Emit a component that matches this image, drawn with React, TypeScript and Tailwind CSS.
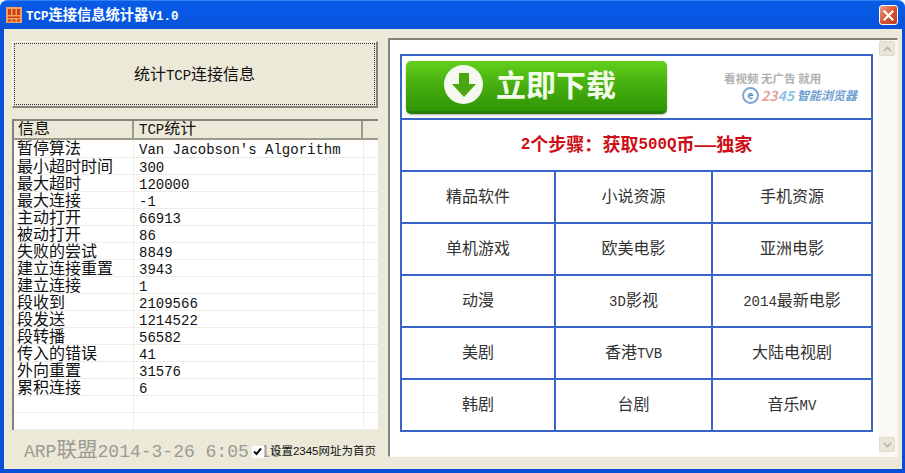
const rows: [string, string][] = [
  ["暂停算法", "Van Jacobson's Algorithm"],
  ["最小超时时间", "300"],
  ["最大超时", "120000"],
  ["最大连接", "-1"],
  ["主动打开", "66913"],
  ["被动打开", "86"],
  ["失败的尝试", "8849"],
  ["建立连接重置", "3943"],
  ["建立连接", "1"],
  ["段收到", "2109566"],
  ["段发送", "1214522"],
  ["段转播", "56582"],
  ["传入的错误", "41"],
  ["外向重置", "31576"],
  ["累积连接", "6"],
  ["", ""],
  ["", ""],
];

const cells = [
  ["精品软件", "小说资源", "手机资源"],
  ["单机游戏", "欧美电影", "亚洲电影"],
  ["动漫", "3D影视", "2014最新电影"],
  ["美剧", "香港TVB", "大陆电视剧"],
  ["韩剧", "台剧", "音乐MV"],
];

function T({ s }: { s: string }) {
  const parts = s.match(/[\x00-\x7f]+|[^\x00-\x7f]+/g) || [];
  return (
    <>
      {parts.map((p, i) =>
        /[\x00-\x7f]/.test(p[0]) ? (
          <span key={i}>{p}</span>
        ) : (
          <span key={i} className="text-[1.143em]">
            {p}
          </span>
        ),
      )}
    </>
  );
}

const font = "font-['Liberation_Mono','Noto_Sans_CJK_SC',monospace]";

export default function App() {
  return (
    <div className={`w-[905px] h-[473px] overflow-hidden bg-white flex flex-col text-[#111] ${font}`}>
      <div className="h-[29px] shrink-0 rounded-t-[7px] bg-gradient-to-b from-[#0a5be6] via-[#0558e4] to-[#0a52d8] flex items-center pl-[6px] pr-[7px] border-t border-[#2f82f5]">
        <svg width="16" height="16" viewBox="0 0 16 16" className="shrink-0">
          <rect width="16" height="16" fill="#f6a15a" />
          <rect x="2" y="2" width="3" height="6" fill="#c8401a" />
          <rect x="6.5" y="2" width="3" height="6" fill="#c8401a" />
          <rect x="11" y="2" width="3" height="6" fill="#c8401a" />
          <rect x="2" y="9.5" width="12" height="1.5" fill="#c8401a" />
          <rect x="2" y="12.5" width="3" height="2" fill="#c8401a" />
          <rect x="6.5" y="12.5" width="3" height="2" fill="#c8401a" />
          <rect x="11" y="12.5" width="3" height="2" fill="#c8401a" />
        </svg>
        <div className="ml-[4px] pt-[2px] text-white font-bold text-[12.5px] leading-none whitespace-nowrap">
          <T s="TCP连接信息统计器V1.0" />
        </div>
        <div className="ml-auto w-[19px] h-[20px] rounded-[3px] border border-white bg-gradient-to-br from-[#e8a08a] via-[#d9552e] to-[#b83a1c] flex items-center justify-center">
          <svg width="11" height="11" viewBox="0 0 11 11">
            <path d="M1.5 1.5 L9.5 9.5 M9.5 1.5 L1.5 9.5" stroke="#fff" strokeWidth="2.2" strokeLinecap="square" />
          </svg>
        </div>
      </div>

      <div className="flex-1 min-h-0 bg-[#0a4fd8] px-[4px] pb-[4px] flex">
        <div className="flex-1 bg-[#ece9d8] flex pl-[8px] pr-[4px] pt-[9px] pb-[6px] gap-[10px]">
          <div className="w-[366px] shrink-0 flex flex-col">
            <div className="h-[67px] shrink-0 mt-[3px] border-r-2 border-b-2 border-[#85847a] border-t border-l border-t-[#fbfaf5] border-l-[#fbfaf5] p-[1px]">
              <div className="h-full border border-dotted border-[#333] flex items-center justify-center pt-[4px] text-[14px] leading-none">
                <T s="统计TCP连接信息" />
              </div>
            </div>
            <div className="mt-[11px] h-[311px] shrink-0 border-t-2 border-l-2 border-[#85847a] bg-white flex flex-col overflow-hidden">
              <div className="h-[19px] shrink-0 bg-[#ece9d8] flex border-b-2 border-[#9c9a8c] text-[14px] leading-[17px]">
                <div className="w-[120px] pl-[4px] pt-[1px] border-r-2 border-[#9c9a8c]">
                  <T s="信息" />
                </div>
                <div className="w-[229px] pl-[5px] pt-[1px] border-r-2 border-[#9c9a8c]">
                  <T s="TCP统计" />
                </div>
              </div>
              {rows.map((r, i) => (
                <div
                  key={i}
                  className={`${i === 0 ? "h-[18px]" : "h-[17px]"} shrink-0 flex border-b border-[#eeede6] text-[14px] leading-[16px] whitespace-nowrap`}
                >
                  <div className="w-[120px] pl-[3px] pt-[2px] border-r border-[#eeede6]">
                    <T s={r[0]} />
                  </div>
                  <div className="w-[230px] pl-[5px] pt-[2px] border-r border-[#eeede6]">{r[1]}</div>
                </div>
              ))}
            </div>
            <div className="relative shrink-0 mt-[9px] h-[24px] pl-[12px] pt-[2px] text-[18px] leading-[22px] text-[#9c9b91] whitespace-nowrap overflow-hidden">
              <T s="ARP联盟2014-3-26 6:05:16" />
              <div className="absolute right-[2px] top-[6px] flex items-center h-[13px]">
                <div className="w-[12px] h-[12px] bg-white flex items-center justify-center">
                  <svg width="9" height="9" viewBox="0 0 9 9">
                    <path d="M1 4.5 L3.5 7 L8 1.5" stroke="#111" strokeWidth="2" fill="none" />
                  </svg>
                </div>
                <span className="ml-[6px] text-[11.5px] leading-none text-[#111] font-['Liberation_Sans','Noto_Sans_CJK_SC',sans-serif]">
                  设置2345网址为首页
                </span>
              </div>
            </div>
          </div>

          <div className="flex-1 min-w-0 mb-[6px] bg-white border-t-2 border-l-2 border-[#85847a] border-r border-b border-r-[#fbfaf5] border-b-[#fbfaf5] flex">
            <div className="flex-1 pt-[14px] pl-[10px] pr-[6px]">
              <div className="w-[473px] h-[378px] border-2 border-[#3b64c8] flex flex-col">
                <div className="h-[64px] shrink-0 flex items-center border-b-2 border-[#3b64c8] pl-[4px]">
                  <div className="w-[261px] h-[53px] rounded-[5px] bg-gradient-to-b from-[#62d01c] via-[#45ad0e] to-[#2f9606] border-b-[3px] border-[#287c08] shadow-[0_1px_2px_rgba(0,0,0,0.3)] flex items-center pl-[38px] pb-[2px]">
                    <div className="w-[39px] h-[39px] rounded-full bg-[#f4f8ee] flex items-center justify-center">
                      <svg width="28" height="28" viewBox="0 0 28 28">
                        <path d="M9 2 H19 V13 H26 L14 26 L2 13 H9 Z" fill="#4aa80e" />
                      </svg>
                    </div>
                    <span className="ml-[13px] pb-[3px] text-[30px] leading-none font-bold text-[#f2fae8] font-['Noto_Sans_CJK_SC',sans-serif]">
                      立即下载
                    </span>
                  </div>
                  <div className="ml-[57px] flex flex-col font-['Noto_Sans_CJK_SC',sans-serif]">
                    <div className="text-[11.5px] leading-[14px] font-bold text-[#b0b0b0] whitespace-nowrap">看视频 无广告 就用</div>
                    <div className="mt-[2px] ml-[18px] flex items-center whitespace-nowrap">
                      <div className="w-[17px] h-[17px] rounded-full border-2 border-[#7fa6d8] text-[10px] leading-[12px] text-center font-bold text-[#4d86c8]">e</div>
                      <span className="ml-[2px] text-[14px] leading-none font-bold italic text-[#e8a0a0]">23</span>
                      <span className="text-[14px] leading-none font-bold italic text-[#8cc4e8]">45</span>
                      <span className="ml-[3px] text-[12px] leading-none font-bold italic text-[#6f9fd0]">智能浏览器</span>
                    </div>
                  </div>
                </div>
                <div className="h-[52px] shrink-0 flex items-center justify-center pt-[2px] border-b-2 border-[#3b64c8] font-bold text-[15.8px] text-[#cc0f16] leading-none whitespace-nowrap">
                  <T s="2个步骤：获取500Q币——独家" />
                </div>
                <div className="flex-1 grid grid-cols-[154px_157px_158px] grid-rows-[52px_52px_52px_52px_1fr]">
                  {cells.flat().map((c, i) => (
                    <div
                      key={i}
                      className={`flex items-center justify-center pt-[2px] text-[14px] leading-none text-[#333] whitespace-nowrap ${i % 3 < 2 ? "border-r-2 border-[#3b64c8]" : ""} ${i < 12 ? "border-b-2 border-b-[#3b64c8]" : ""}`}
                    >
                      <T s={c} />
                    </div>
                  ))}
                </div>
              </div>
            </div>
            <div className="w-[18px] shrink-0 bg-[#f9f8f3] flex flex-col justify-between pb-[4px] pt-[1px]">
              <div className="w-[16px] h-[15px] bg-[#e8e6d8] border border-[#dedcce] rounded-[2px] flex items-center justify-center">
                <svg width="9" height="6" viewBox="0 0 9 6">
                  <path d="M1 5 L4.5 1.5 L8 5" stroke="#b5b4a6" strokeWidth="1.6" fill="none" />
                </svg>
              </div>
              <div className="w-[16px] h-[15px] bg-[#e8e6d8] border border-[#dedcce] rounded-[2px] flex items-center justify-center">
                <svg width="9" height="6" viewBox="0 0 9 6">
                  <path d="M1 1 L4.5 4.5 L8 1" stroke="#b5b4a6" strokeWidth="1.6" fill="none" />
                </svg>
              </div>
            </div>
          </div>
        </div>
      </div>
    </div>
  );
}
